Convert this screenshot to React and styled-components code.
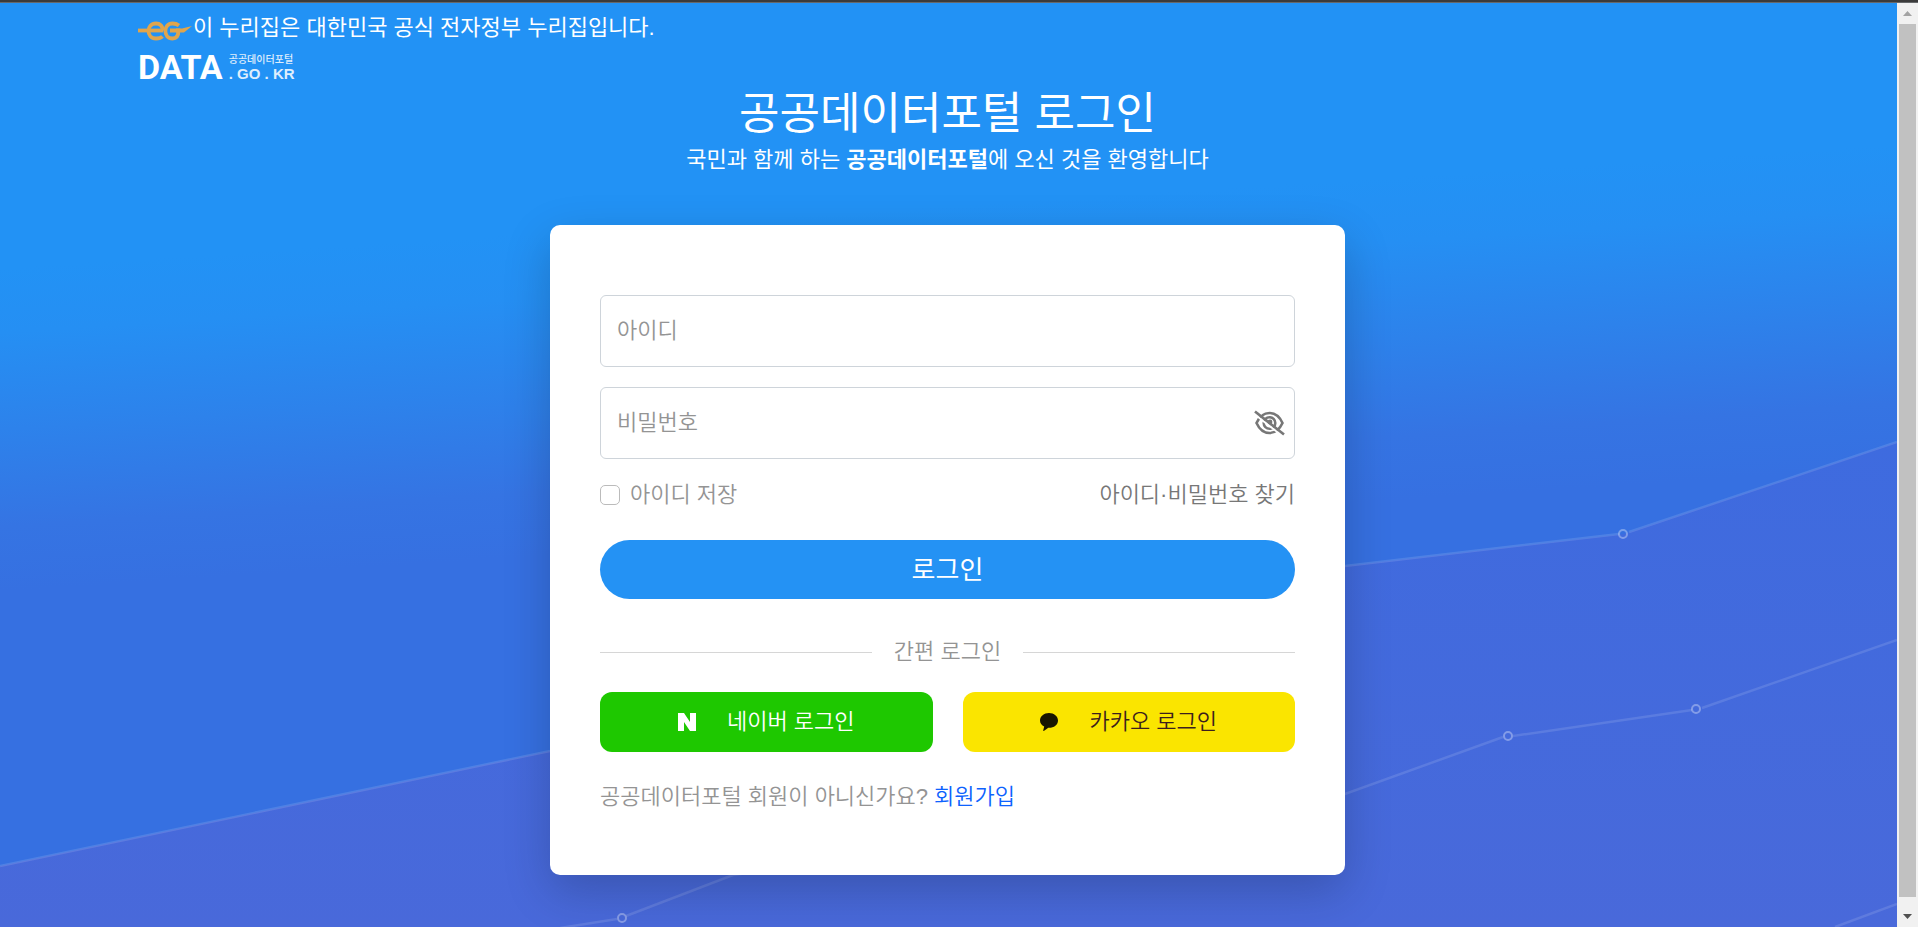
import React, { useState } from "react";
import styled, { createGlobalStyle } from "styled-components";

const GlobalStyle = createGlobalStyle`
  *, *::before, *::after { box-sizing: border-box; }
  body {
    margin: 0;
    background: #2292f5;
    font-family: "Liberation Sans", "Noto Sans CJK KR", sans-serif;
    font-weight: 400;
    font-size: 22px;
    line-height: 32px;
  }
  button, input { font: inherit; }
`;

const Page = styled.div`
  display: flex;
  flex-direction: column;
  height: 100vh;
`;

const TopStrip = styled.div`
  flex: none;
  height: 3px;
  background: #3b3b3b;
  border-bottom: 1px solid #66686a;
`;

const Body = styled.div`
  display: flex;
  flex: 1;
  min-height: 0;
`;

const Screen = styled.div`
  position: relative;
  isolation: isolate;
  flex: 1;
  min-width: 0;
  overflow: hidden;
  background: #2292f5;
`;

const Backdrop = styled.svg`
  position: absolute;
  inset: 0;
  z-index: -1;
  width: 100%;
  height: 100%;
`;

const Header = styled.header`
  padding: 9px 138px 0;
  color: #fff;
`;

const Notice = styled.p`
  display: flex;
  align-items: center;
  margin: 0;
`;

const Logo = styled.a`
  display: flex;
  align-items: center;
  gap: 6px;
  width: fit-content;
  height: 28px;
  margin-top: 9px;
  color: #fff;
  text-decoration: none;
`;

const LogoName = styled.span`
  font: 700 34px/28px Roboto, sans-serif;
`;

const LogoSide = styled.span`
  display: flex;
  flex-direction: column;
  font: 700 15px/16px "Liberation Sans", sans-serif;
  opacity: 0.85;
`;

const LogoCaption = styled.span`
  font: 500 10px/14px "Noto Sans CJK KR", sans-serif;
`;

const Main = styled.main`
  display: flex;
  flex-direction: column;
  align-items: center;
  padding: 3px 2px 0 0;
`;

const Title = styled.h1`
  margin: 0;
  color: #fff;
  font-size: 44px;
  font-weight: 400;
  line-height: 60px;
`;

const Welcome = styled.p`
  margin: 0 0 49px;
  color: #fff;

  strong { font-weight: 700; }
`;

const Card = styled.form`
  width: 100%;
  max-width: 795px;
  padding: 70px 50px 62px;
  border-radius: 10px;
  background: #fff;
  color: #949494;
  font-weight: 350;
  box-shadow: 0 16px 48px rgba(0, 0, 0, 0.2);
`;

const Field = styled.div`
  position: relative;
  margin-bottom: 20px;
`;

const TextInput = styled.input`
  display: block;
  width: 100%;
  height: 72px;
  padding: 0 16px;
  border: 1px solid #ced4da;
  border-radius: 6px;
  background: #fff;
  color: #333;
  outline-color: #2492f4;

  &::placeholder { color: #949494; opacity: 1; }
`;

const EyeButton = styled.button`
  position: absolute;
  top: 20px;
  right: 10px;
  display: flex;
  align-items: center;
  height: 32px;
  padding: 0;
  border: 0;
  background: none;
`;

const Options = styled.div`
  display: flex;
  justify-content: space-between;
  margin-bottom: 29px;
`;

const SaveLabel = styled.label`
  display: flex;
  align-items: center;
  gap: 10px;
`;

const CheckBox = styled.input`
  appearance: none;
  width: 20px;
  height: 20px;
  margin: 0;
  border: 1px solid #bbb;
  border-radius: 5px;
  background: #fff;

  &:checked { background: #2492f4; }
`;

const TextLink = styled.a`
  color: ${(p) => p.$color};
  text-decoration: none;
`;

const LoginButton = styled.button`
  display: block;
  width: 100%;
  height: 59px;
  border: 0;
  border-radius: 30px;
  background: #2492f4;
  color: #fff;
  font-size: 26px;
  font-weight: 400;
`;

const Divider = styled.div`
  display: flex;
  align-items: center;
  gap: 22px;
  margin: 37px 0 24px;

  &::before, &::after {
    content: "";
    flex: 1;
    border-top: 1px solid #d6d6d6;
  }
`;

const SocialRow = styled.div`
  display: grid;
  grid-template-columns: 1fr 1fr;
  gap: 30px;
  margin-bottom: 29px;
`;

const SocialButton = styled.button`
  display: flex;
  align-items: center;
  justify-content: center;
  gap: 31px;
  height: 60px;
  border: 0;
  border-radius: 12px;
  background: ${(p) => p.$background};
  color: ${(p) => p.$color};
`;

const SignUp = styled.p`
  display: flex;
  gap: 6px;
  margin: 0;
`;

const ScrollRail = styled.div`
  flex: none;
  display: flex;
  flex-direction: column;
  width: 21px;
  background: #f1f1f1;
`;

const ScrollArrow = styled.div`
  display: flex;
  align-items: ${(p) => p.$align};
  justify-content: center;
  height: ${(p) => p.$height};
  padding: 8px 0;
`;

const ScrollThumb = styled.div`
  flex: 1;
  margin: 0 2px;
  background: #c1c1c1;
`;

function BackgroundArt() {
  return (
    <Backdrop viewBox="0 0 1897 924" preserveAspectRatio="none" aria-hidden="true">
      <defs>
        <linearGradient id="sky" gradientUnits="userSpaceOnUse" x1="0" y1="265" x2="21" y2="587">
          <stop offset="0" stopColor="#2292f5" />
          <stop offset="0.2" stopColor="#258ff3" />
          <stop offset="0.5" stopColor="#2d82eb" />
          <stop offset="0.8" stopColor="#3574e3" />
          <stop offset="1" stopColor="#3670e1" />
        </linearGradient>
        <linearGradient id="ground" gradientUnits="userSpaceOnUse" x1="0" y1="440" x2="0" y2="924">
          <stop offset="0" stopColor="#3e6bdf" />
          <stop offset="1" stopColor="#4969da" />
        </linearGradient>
      </defs>
      <rect width="1897" height="924" fill="url(#sky)" />
      <path d="M0 863L550 748L1345 563L1624 531L1897 439V924H0Z" fill="url(#ground)" />
      <g fill="none" stroke="#fff" strokeOpacity="0.12" strokeWidth="2.5">
        <path d="M0 863L550 748L1345 563L1619 531M1629 529L1897 439" />
        <path d="M560 925L617 916M626 913L733 872L1345 791L1503 734M1513 733L1692 707M1702 705L1897 637" />
        <path d="M1835 924L1897 901" />
      </g>
      <g fill="none" stroke="#fff" strokeOpacity="0.34" strokeWidth="2">
        <circle cx="1623" cy="531" r="4" />
        <circle cx="1508" cy="733" r="4" />
        <circle cx="1696" cy="706" r="4" />
        <circle cx="622" cy="915" r="4" />
      </g>
    </Backdrop>
  );
}

function GovernmentMark() {
  return (
    <svg width="55" height="26" viewBox="0 0 55 26" aria-hidden="true">
      <g fill="none" stroke="#e0a54c" strokeWidth="3.800">
        <path d="M0 15.500H25" />
        <path d="M24.500 15.500C25 11 22 8.500 18 8.500C8 8.500 8 23.500 18 23.500C21 23.500 23 23 24.500 21.500" />
        <path d="M41 10.500C39 9 37 8.500 34.500 8.500C25 8.500 25 23.500 34.500 23.500C39 23.500 40.500 20.500 40.500 15.500H32" />
      </g>
      <path d="M38 13.600H44L54 11L46 17.400H38Z" fill="#e0a54c" />
    </svg>
  );
}

function EyeOffIcon() {
  return (
    <svg width="31" height="26" viewBox="0 0 31 26" aria-hidden="true">
      <g fill="none" stroke="#777" strokeWidth="2.600">
        <path d="M2.500 13C5.500 6.500 10 3 15.500 3S25.500 6.500 28.500 13C25.500 19.500 21 23 15.500 23S5.500 19.500 2.500 13Z" />
        <circle cx="15.500" cy="13" r="5.800" />
      </g>
      <circle cx="16" cy="12" r="2.400" fill="#777" />
      <path d="M1 4.500L27 25" stroke="#fff" strokeWidth="2" />
      <path d="M1 1.500L30 24.500" stroke="#777" strokeWidth="2.600" />
    </svg>
  );
}

function NaverMark() {
  return (
    <svg width="18" height="18" viewBox="0 0 18 18" aria-hidden="true">
      <path d="M0 0H6L12 9V0H18V18H12L6 9V18H0Z" fill="#fff" />
    </svg>
  );
}

function KakaoMark() {
  return (
    <svg width="18" height="18" viewBox="0 0 18 18" aria-hidden="true">
      <path
        d="M9 0C4 0 0 3.300 0 7.400C0 10 1.700 12.300 4.200 13.600L3.200 17.500C3.100 17.900 3.500 18.100 3.800 17.900L8.300 14.800H9C14 14.800 18 11.500 18 7.400C18 3.300 14 0 9 0Z"
        fill="#191600"
      />
    </svg>
  );
}

export default function App() {
  const [visible, setVisible] = useState(false);

  return (
    <Page>
      <GlobalStyle />
      <TopStrip />
      <Body>
        <Screen>
          <BackgroundArt />
          <Header>
            <Notice>
              <GovernmentMark />이 누리집은 대한민국 공식 전자정부 누리집입니다.
            </Notice>
            <Logo href="#">
              <LogoName>DATA</LogoName>
              <LogoSide>
                <LogoCaption>공공데이터포털</LogoCaption>. GO . KR
              </LogoSide>
            </Logo>
          </Header>
          <Main>
            <Title>공공데이터포털 로그인</Title>
            <Welcome>
              국민과 함께 하는 <strong>공공데이터포털</strong>에 오신 것을 환영합니다
            </Welcome>
            <Card onSubmit={(e) => e.preventDefault()}>
              <Field>
                <TextInput type="text" aria-label="아이디" placeholder="아이디" />
              </Field>
              <Field>
                <TextInput
                  type={visible ? "text" : "password"}
                  aria-label="비밀번호"
                  placeholder="비밀번호"
                />
                <EyeButton type="button" aria-label="비밀번호 표시" onClick={() => setVisible(!visible)}>
                  <EyeOffIcon />
                </EyeButton>
              </Field>
              <Options>
                <SaveLabel>
                  <CheckBox type="checkbox" />
                  아이디 저장
                </SaveLabel>
                <TextLink href="#" $color="#777">아이디·비밀번호 찾기</TextLink>
              </Options>
              <LoginButton type="submit">로그인</LoginButton>
              <Divider>간편 로그인</Divider>
              <SocialRow>
                <SocialButton type="button" $background="#1ec800" $color="#fff">
                  <NaverMark />
                  네이버 로그인
                </SocialButton>
                <SocialButton type="button" $background="#fae500" $color="#3c1e1e">
                  <KakaoMark />
                  카카오 로그인
                </SocialButton>
              </SocialRow>
              <SignUp>
                공공데이터포털 회원이 아니신가요?
                <TextLink href="#" $color="#0d62fe">회원가입</TextLink>
              </SignUp>
            </Card>
          </Main>
        </Screen>
        <ScrollRail aria-hidden="true">
          <ScrollArrow $height="21px" $align="center">
            <svg width="9" height="5" viewBox="0 0 9 5"><path d="M0 5L4.500 0L9 5Z" fill="#a3a3a3" /></svg>
          </ScrollArrow>
          <ScrollThumb />
          <ScrollArrow $height="30px" $align="flex-end">
            <svg width="9" height="5" viewBox="0 0 9 5"><path d="M0 0H9L4.500 5Z" fill="#505050" /></svg>
          </ScrollArrow>
        </ScrollRail>
      </Body>
    </Page>
  );
}
